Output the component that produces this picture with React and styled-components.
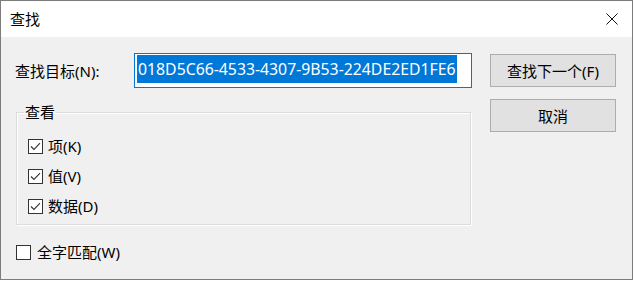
import React from "react";
import styled, { createGlobalStyle } from "styled-components";

const Global = createGlobalStyle`
  html, body { margin: 0; padding: 0; background: #ffffff; }
  body { font-family: "Noto Sans", "Noto Sans CJK SC", sans-serif; }
`;

const Window = styled.div`
  box-sizing: border-box;
  width: 633px;
  height: 280px;
  border: 1px solid #7c7c7c;
  background: #f0f0f0;
  display: flex;
  flex-direction: column;
  font-family: "Noto Sans", "Noto Sans CJK SC", sans-serif;
  font-size: 15px;
  color: #000;
`;

const TitleBar = styled.div`
  height: 36px;
  background: #ffffff;
  display: flex;
  align-items: center;
  justify-content: space-between;
  padding: 0 14px 0 9px;
`;

const Title = styled.span`
  font-size: 15px;
  line-height: 20px;
`;

const CloseIcon = styled.svg`
  width: 12px;
  height: 12px;
  display: block;
`;

const Content = styled.div`
  display: flex;
  gap: 18px;
  padding: 16px 0 0 14px;
`;

const LeftCol = styled.div`
  width: 457px;
  display: flex;
  flex-direction: column;
`;

const FindRow = styled.div`
  display: flex;
  align-items: center;
  height: 35px;
`;

const Label = styled.span`
  width: 119px;
  line-height: 20px;
`;

const InputBox = styled.div`
  box-sizing: border-box;
  width: 338px;
  height: 35px;
  border: 1px solid #0078d7;
  background: #ffffff;
  padding: 1px 2px;
  display: flex;
  align-items: flex-start;
`;

const Selected = styled.span`
  display: inline-block;
  height: 28px;
  line-height: 28px;
  background: #0078d7;
  color: #ffffff;
  font-size: 15.8px;
  padding: 0 1px;
  white-space: nowrap;
`;

const Group = styled.fieldset`
  margin: 14px 0 0 1px;
  width: 455px;
  box-sizing: border-box;
  border: 1px solid #dcdcdc;
  box-shadow: inset 1px 1px 0 #ffffff, 1px 1px 0 #ffffff;
  padding: 0 0 3px 7px;
`;

const Legend = styled.legend`
  padding: 0 1px;
  line-height: 20px;
  font-size: 15px;
`;

const Rows = styled.div`
  display: flex;
  flex-direction: column;
  padding: 9px 0 0 4px;
`;

const CheckRow = styled.label`
  display: flex;
  align-items: center;
  gap: 5px;
  height: 30px;
  line-height: 20px;
`;

const Box = styled.span`
  box-sizing: border-box;
  width: 15px;
  height: 15px;
  border: 1px solid #333333;
  background: #ffffff;
  display: flex;
  align-items: center;
  justify-content: center;
  flex: none;
`;

const WholeRow = styled(CheckRow)`
  margin: 12px 0 0 1px;
  gap: 6px;
`;

const RightCol = styled.div`
  display: flex;
  flex-direction: column;
  gap: 12px;
  padding-top: 1px;
`;

const Button = styled.button`
  box-sizing: border-box;
  width: 126px;
  height: 33px;
  border: 1px solid #adadad;
  background: #e1e1e1;
  font-family: "Noto Sans", "Noto Sans CJK SC", sans-serif;
  font-size: 15px;
  color: #000;
  padding: 0;
  line-height: 20px;
`;

const Check = ({ checked }) => (
  <Box>
    {checked && (
      <svg width="11" height="9" viewBox="0 0 11 9">
        <path d="M1 4.5 L4 7.5 L10 1.2" fill="none" stroke="#333" strokeWidth="1.1" />
      </svg>
    )}
  </Box>
);

export default function App() {
  return (
    <>
      <Global />
      <Window>
        <TitleBar>
          <Title>查找</Title>
          <CloseIcon viewBox="0 0 12 12">
            <path d="M0.5 0.5 L11.5 11.5 M11.5 0.5 L0.5 11.5" stroke="#111" strokeWidth="1" />
          </CloseIcon>
        </TitleBar>
        <Content>
          <LeftCol>
            <FindRow>
              <Label>查找目标(N):</Label>
              <InputBox>
                <Selected>018D5C66-4533-4307-9B53-224DE2ED1FE6</Selected>
              </InputBox>
            </FindRow>
            <Group>
              <Legend>查看</Legend>
              <Rows>
                <CheckRow><Check checked />项(K)</CheckRow>
                <CheckRow><Check checked />值(V)</CheckRow>
                <CheckRow><Check checked />数据(D)</CheckRow>
              </Rows>
            </Group>
            <WholeRow><Check />全字匹配(W)</WholeRow>
          </LeftCol>
          <RightCol>
            <Button>查找下一个(F)</Button>
            <Button>取消</Button>
          </RightCol>
        </Content>
      </Window>
    </>
  );
}
